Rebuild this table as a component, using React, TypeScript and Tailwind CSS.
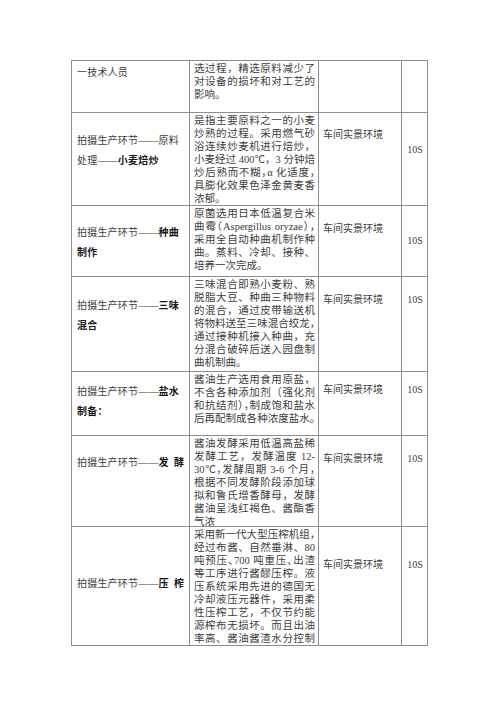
// 生产环节拍摄脚本表（截图复刻）
// 每一行：左侧环节名、中间说明（按原稿逐行断开）、拍摄环境、时长

type Row = {
  h: string;
  lead: string[];
  bold: string;
  leadPad: string;
  lines: string[];
  scene?: string;
  scenePad: string;
  dur?: string;
  durPad: string;
};

const rows: Row[] = [
  {
    h: "h-[52px]",
    lead: ["一技术人员"],
    bold: "",
    leadPad: "pt-[2px]",
    lines: ["选过程，精选原料减少了", "对设备的损坏和对工艺的", "影响。"],
    scenePad: "pt-0",
    durPad: "pt-0",
  },
  {
    h: "h-[93px]",
    lead: ["拍摄生产环节——原料", "处理——"],
    bold: "小麦焙炒",
    leadPad: "pt-[18px]",
    lines: [
      "是指主要原料之一的小麦",
      "炒熟的过程。采用燃气砂",
      "浴连续炒麦机进行焙炒，",
      "小麦经过 400℃，3 分钟焙",
      "炒后熟而不糊，α 化适度，",
      "具膨化效果色泽金黄麦香",
      "浓郁。",
    ],
    scene: "车间实景环境",
    scenePad: "pt-[15px]",
    dur: "10S",
    durPad: "pt-[30px]",
  },
  {
    h: "h-[71px]",
    lead: ["拍摄生产环节——", ""],
    bold: "种曲\n制作",
    leadPad: "pt-[17px]",
    lines: [
      "原菌选用日本低温复合米",
      "曲霉（Aspergillus oryzae），",
      "采用全自动种曲机制作种",
      "曲。蒸料、冷却、接种、",
      "培养一次完成。",
    ],
    scene: "车间实景环境",
    scenePad: "pt-[16px]",
    dur: "10S",
    durPad: "pt-[28px]",
  },
  {
    h: "h-[95px]",
    lead: ["拍摄生产环节——", ""],
    bold: "三味\n混合",
    leadPad: "pt-[19px]",
    lines: [
      "三味混合即熟小麦粉、熟",
      "脱脂大豆、种曲三种物料",
      "的混合，通过皮带输送机",
      "将物料送至三味混合绞龙，",
      "通过接种机接入种曲，充",
      "分混合破碎后送入园盘制",
      "曲机制曲。",
    ],
    scene: "车间实景环境",
    scenePad: "pt-[16px]",
    dur: "10S",
    durPad: "pt-[16px]",
  },
  {
    h: "h-[64px]",
    lead: ["拍摄生产环节——", ""],
    bold: "盐水\n制备：",
    leadPad: "pt-[10px]",
    lines: [
      "酱油生产选用食用原盐，",
      "不含各种添加剂（强化剂",
      "和抗结剂），制成饱和盐水",
      "后再配制成各种浓度盐水。",
    ],
    scene: "车间实景环境",
    scenePad: "pt-[11px]",
    dur: "10S",
    durPad: "pt-[11px]",
  },
  {
    h: "h-[91px]",
    lead: ["拍摄生产环节——"],
    bold: "发\u2002酵",
    leadPad: "pt-[17px]",
    lines: [
      "酱油发酵采用低温高盐稀",
      "发酵工艺，发酵温度 12-",
      "30℃，发酵周期 3-6 个月，",
      "根据不同发酵阶段添加球",
      "拟和鲁氏增香酵母，发酵",
      "酱油呈浅红褐色、酱酯香",
      "气浓",
    ],
    scene: "车间实景环境",
    scenePad: "pt-[16px]",
    dur: "10S",
    durPad: "pt-[16px]",
  },
  {
    h: "h-[119px]",
    lead: ["拍摄生产环节——"],
    bold: "压\u2002榨",
    leadPad: "pt-[47px]",
    lines: [
      "采用新一代大型压榨机组，",
      "经过布酱、自然垂淋、80",
      "吨预压、700 吨重压、出渣",
      "等工序进行酱醪压榨。液",
      "压系统采用先进的德国无",
      "冷却液压元器件，采用柔",
      "性压榨工艺，不仅节约能",
      "源榨布无损坏。而且出油",
      "率高、酱油酱渣水分控制",
    ],
    scene: "车间实景环境",
    scenePad: "pt-[31px]",
    dur: "10S",
    durPad: "pt-[31px]",
  },
];

// rough width in em: CJK = 1, digits/latin = 0.5, space = 0.25
const ems = (s: string) =>
  [...s].reduce((w, c) => w + (c === " " ? 0.25 : c.charCodeAt(0) > 0x2000 ? 1 : 0.5), 0);

function Lead({ r }: { r: Row }) {
  // bold part may carry its own line break ("种曲\n制作")
  const [b1, b2] = r.bold.split("\n");
  if (r.lead.length === 2 && r.lead[1] === "" && b2) {
    return (
      <>
        <div className="whitespace-nowrap">
          {r.lead[0]}
          <b className="text-[#161616]">{b1}</b>
        </div>
        <div className="whitespace-nowrap">
          <b className="text-[#161616]">{b2}</b>
        </div>
      </>
    );
  }
  return (
    <>
      {r.lead.map((t, k) => (
        <div key={k} className="whitespace-nowrap">
          {t}
          {k === r.lead.length - 1 && r.bold && <b className="text-[#161616]">{r.bold}</b>}
        </div>
      ))}
    </>
  );
}

export default function App() {
  return (
    <div
      className="w-[500px] h-[708px] bg-white overflow-hidden text-[#3d3d3d]"
      style={{ fontFamily: '"Liberation Serif", "Noto Sans CJK SC", serif' }}
    >
      <div className="ml-[71px] mt-[60px] w-[357px] border-r border-b border-[#8e8e8e]">
        {rows.map((r, i) => (
          <div key={i} className={`grid grid-cols-[118px_129px_83px_27px] ${r.h}`}>
            <div className={`border-l border-t border-[#8e8e8e] pl-[5px] pr-[2px] text-[10px] leading-[20px] tracking-[0.2px] overflow-hidden ${r.leadPad}`}>
              <Lead r={r} />
            </div>
            <div className="border-l border-t border-[#8e8e8e] pl-[4px] pr-[3px] pt-px text-[10.5px] leading-[13px] overflow-hidden">
              {r.lines.map((l, j) => {
                const last = j === r.lines.length - 1 && ems(l) < 9;
                return (
                  <div
                    key={j}
                    className={
                      (last ? "whitespace-nowrap" : "whitespace-nowrap text-justify [text-align-last:justify]") +
                      (ems(l) > 11.6 ? " [font-feature-settings:'halt']" : "")
                    }
                  >
                    {l}
                  </div>
                );
              })}
            </div>
            <div className={`border-l border-t border-[#8e8e8e] pl-[4px] text-[10px] leading-[13px] ${r.scenePad}`}>
              {r.scene}
            </div>
            <div className={`border-l border-t border-[#8e8e8e] text-center text-[10px] leading-[13px] ${r.durPad}`}>
              {r.dur}
            </div>
          </div>
        ))}
      </div>
    </div>
  );
}
